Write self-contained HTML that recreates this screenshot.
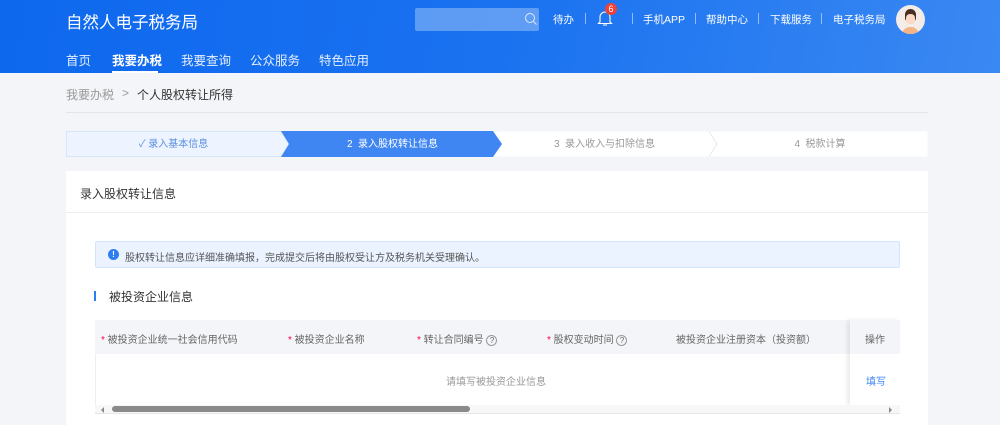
<!DOCTYPE html>
<html><head><meta charset="utf-8"><style>
*{margin:0;padding:0;box-sizing:border-box}
body{width:1000px;height:425px;overflow:hidden;background:#f3f5f8;font-family:"Liberation Sans","Noto Sans CJK SC",sans-serif;position:relative}
.hd{position:absolute;left:0;top:0;width:1000px;height:73px;background:linear-gradient(100deg,#0e68ee 0%,#1a72f0 50%,#3a88f2 100%)}
.a{position:absolute;white-space:nowrap}
.w{color:#fff}
.nav{top:50px;font-size:12.5px;color:#e6efff}
.sep{position:absolute;top:13px;width:1px;height:11px;background:rgba(255,255,255,.5)}
.tl{font-size:10.5px;color:#fff;top:12px}
.step{position:absolute;top:131px;height:26px;font-size:10px;line-height:28px;text-align:center}
.th{font-size:10px;color:#666;top:331px}
.st{color:#f04;}
</style></head><body>
<div class="hd"></div>
<div class="a w" style="left:66px;top:9px;font-size:16.5px">自然人电子税务局</div>
<div class="a nav" style="left:66px">首页</div>
<div class="a nav" style="left:112px;font-weight:bold;color:#fff">我要办税</div>
<div class="a" style="left:112px;top:71px;width:46px;height:2px;background:#fff"></div>
<div class="a nav" style="left:181px">我要查询</div>
<div class="a nav" style="left:250px">公众服务</div>
<div class="a nav" style="left:319px">特色应用</div>
<div class="a" style="left:415px;top:8px;width:124px;height:23px;background:rgba(255,255,255,.3);border-radius:2px"></div>
<svg class="a" style="left:524px;top:12px" width="14" height="14" viewBox="0 0 14 14"><circle cx="6" cy="6" r="4.5" fill="none" stroke="#dfe9ff" stroke-width="1"/><path d="M9.3 9.3L12.5 12.5" stroke="#dfe9ff"/></svg>
<div class="a tl" style="left:553px">待办</div>
<div class="sep" style="left:585px"></div>
<svg class="a" style="left:597px;top:9px" width="16" height="18" viewBox="0 0 16 18"><path d="M3 13V8a5 5 0 0110 0v5l1.5 1.5h-13z" fill="none" stroke="#fff" stroke-width="1.1"/><path d="M6 16h4" stroke="#fff"/></svg>
<div class="a" style="left:605px;top:3px;width:12px;height:12px;border-radius:6px;background:#f0413a;color:#fff;font-size:9px;line-height:12px;text-align:center">6</div>
<div class="sep" style="left:632px"></div>
<div class="a tl" style="left:643px">手机APP</div>
<div class="sep" style="left:695px"></div>
<div class="a tl" style="left:706px">帮助中心</div>
<div class="sep" style="left:758px"></div>
<div class="a tl" style="left:770px">下载服务</div>
<div class="sep" style="left:821px"></div>
<div class="a tl" style="left:833px">电子税务局</div>
<div class="a" style="left:896px;top:5px;width:29px;height:29px;border-radius:50%;background:#f4ece6;overflow:hidden"><div style="position:absolute;left:9px;top:4px;width:11px;height:12px;border-radius:6px 6px 3px 3px;background:#4a2e22"></div><div style="position:absolute;left:10px;top:9px;width:9px;height:10px;border-radius:4px;background:#fbd9c6"></div><div style="position:absolute;left:6px;top:22px;width:17px;height:10px;border-radius:8px 8px 0 0;background:#f5b486"></div></div>

<div class="a" style="left:66px;top:86px;font-size:12px;color:#999">我要办税</div>
<div class="a" style="left:122px;top:86px;font-size:12px;color:#999">&gt;</div>
<div class="a" style="left:137px;top:86px;font-size:12px;color:#333">个人股权转让所得</div>
<div class="a" style="left:66px;top:112px;width:862px;height:1px;background:#e2e5ea"></div>

<svg class="a" style="left:66px;top:130px" width="862" height="28" viewBox="0 0 862 28">
<rect x="0.5" y="1.5" width="861" height="25" fill="#fff"/>
<path d="M0.5 1.5H215L223 14 215 26.5H0.5Z" fill="#edf4ff" stroke="#d6e6fb"/>
<path d="M215 1H427L436 14 427 27H215L223 14Z" fill="#3f86f2"/>
<path d="M643 1.5L651 14 643 26.5" fill="none" stroke="#e6e8ec"/>
</svg>
<div class="step" style="left:66px;width:215px;color:#5a8fe0">✓ 录入基本信息</div>
<div class="step" style="left:290px;width:205px;color:#fff">2&nbsp; 录入股权转让信息</div>
<div class="step" style="left:502px;width:205px;color:#999">3&nbsp; 录入收入与扣除信息</div>
<div class="step" style="left:715px;width:210px;color:#999">4&nbsp; 税款计算</div>

<div class="a" style="left:66px;top:171px;width:862px;height:254px;background:#fff"></div>
<div class="a" style="left:80px;top:185px;font-size:12px;color:#333">录入股权转让信息</div>
<div class="a" style="left:66px;top:212px;width:862px;height:1px;background:#eceef2"></div>
<div class="a" style="left:95px;top:241px;width:805px;height:27px;background:#eaf3ff;border:1px solid #d3e5fc;border-radius:2px"></div>
<div class="a" style="left:108px;top:249px;width:11px;height:11px;border-radius:50%;background:#2f7ef0;color:#fff;font-size:8px;line-height:11px;text-align:center;font-weight:bold">!</div>
<div class="a" style="left:125px;top:249px;font-size:10px;color:#555">股权转让信息应详细准确填报，完成提交后将由股权受让方及税务机关受理确认。</div>
<div class="a" style="left:94px;top:291px;width:2px;height:10px;background:#2f7ef0"></div>
<div class="a" style="left:109px;top:288px;font-size:12px;color:#333">被投资企业信息</div>

<div class="a" style="left:95px;top:320px;width:805px;height:34px;background:#f3f5f8"></div>
<div class="a" style="left:95px;top:354px;width:805px;height:51px;background:#fff;border-left:1px solid #eee"></div>
<div class="a th" style="left:101px"><span class="st">* </span>被投资企业统一社会信用代码</div>
<div class="a th" style="left:288px"><span class="st">* </span>被投资企业名称</div>
<div class="a th" style="left:417px"><span class="st">* </span>转让合同编号 <span style="display:inline-block;width:11px;height:11px;border:1px solid #999;border-radius:50%;font-size:8px;line-height:9px;text-align:center">?</span></div>
<div class="a th" style="left:547px"><span class="st">* </span>股权变动时间 <span style="display:inline-block;width:11px;height:11px;border:1px solid #999;border-radius:50%;font-size:8px;line-height:9px;text-align:center">?</span></div>
<div class="a th" style="left:676px">被投资企业注册资本（投资额）</div>
<div class="a" style="left:850px;top:320px;width:50px;height:85px;box-shadow:-3px 0 4px rgba(0,0,0,.08);background:transparent"></div>
<div class="a" style="left:850px;top:320px;width:50px;height:34px;background:#f3f5f8"></div>
<div class="a" style="left:850px;top:354px;width:50px;height:51px;background:#fff"></div>
<div class="a th" style="left:865px">操作</div>
<div class="a" style="left:446px;top:373px;font-size:10px;color:#999">请填写被投资企业信息</div>
<div class="a" style="left:866px;top:373px;font-size:10px;color:#3f86f2">填写</div>
<div class="a" style="left:95px;top:405px;width:805px;height:9px;background:#f7f7f7;border-bottom:1px solid #e6e6e6"></div>
<div class="a" style="left:112px;top:406px;width:358px;height:6px;border-radius:3px;background:#8a8a8a"></div>
<div class="a" style="left:101px;top:407px;width:0;height:0;border:3px solid transparent;border-right-color:#888;border-left:0"></div>
<div class="a" style="left:889px;top:407px;width:0;height:0;border:3px solid transparent;border-left-color:#888;border-right:0"></div>
</body></html>
